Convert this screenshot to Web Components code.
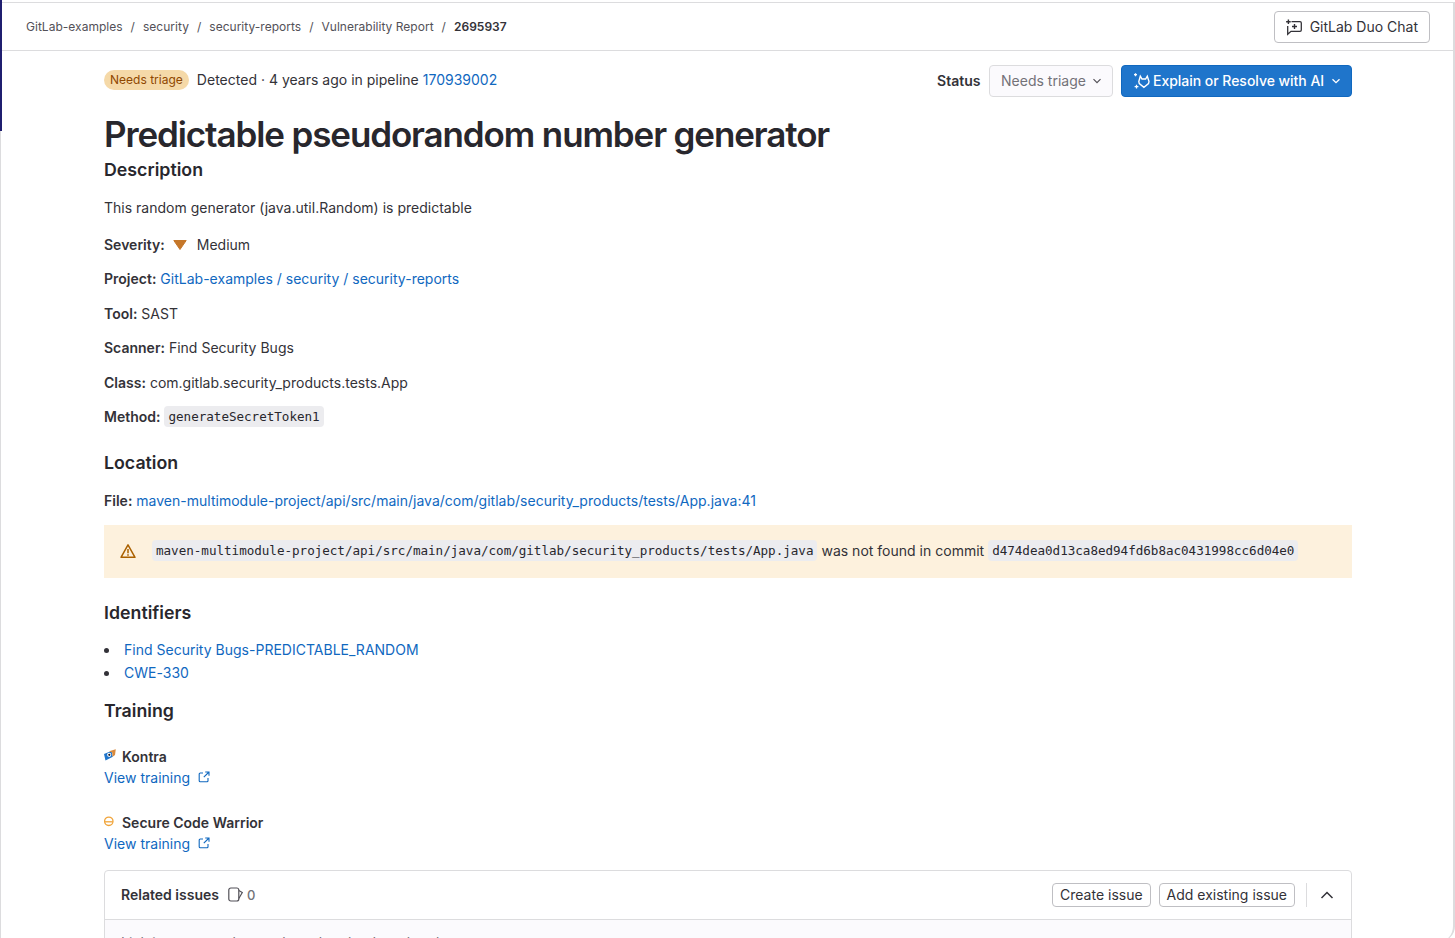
<!DOCTYPE html>
<html lang="en">
<head>
<meta charset="utf-8">
<title>Predictable pseudorandom number generator</title>
<style>
    html, body { margin: 0; height: 100%; background: #fff; overflow: hidden; }
    body { font-family: Inter, "Noto Sans", sans-serif; font-size: 14px; line-height: 20px; color: #333238; letter-spacing: .01px; }
</style>
</head>
<body>
<app-frame>
    <top-bar slot="top"></top-bar>
    <vuln-header></vuln-header>
    <h-title>Predictable pseudorandom number generator</h-title>
    <section-head style="margin-top:4px">Description</section-head>
    <detail-row gap="15.75">This random generator (java.util.Random) is predictable</detail-row>
    <severity-row></severity-row>
    <detail-row gap="14.5"><b>Project:</b> <gl-link>GitLab-examples / security / security-reports</gl-link></detail-row>
    <detail-row gap="14.5"><b>Tool:</b> SAST</detail-row>
    <detail-row gap="14.5"><b>Scanner:</b> Find Security Bugs</detail-row>
    <detail-row gap="14.5"><b>Class:</b> com.gitlab.security_products.tests.App</detail-row>
    <detail-row gap="13.5" style="height:20px"><b>Method:</b> <code-chip>generateSecretToken1</code-chip></detail-row>
    <section-head style="margin-top:24.25px">Location</section-head>
    <detail-row gap="16"><b>File:</b> <gl-link>maven-multimodule-project/api/src/main/java/com/gitlab/security_products/tests/App.java:41</gl-link></detail-row>
    <warn-alert><code-chip>maven-multimodule-project/api/src/main/java/com/gitlab/security_products/tests/App.java</code-chip> was not found in commit <code-chip>d474dea0d13ca8ed94fd6b8ac0431998cc6d04e0</code-chip></warn-alert>
    <section-head style="margin-top:23px">Identifiers</section-head>
    <id-list>
        <id-item><gl-link>Find Security Bugs-PREDICTABLE_RANDOM</gl-link></id-item>
        <id-item><gl-link>CWE-330</gl-link></id-item>
    </id-list>
    <section-head style="margin-top:14px">Training</section-head>
    <training-item name="Kontra" style="margin-top:23px" logo="kontra"></training-item>
    <training-item name="Secure Code Warrior" style="margin-top:24px" logo="scw"></training-item>
    <related-issues></related-issues>
</app-frame>

<script>
    class AppFrame extends HTMLElement {
        constructor() {
            super();
            this.attachShadow({mode: 'open'}).innerHTML = `
            <style>
                :host { display: block; height: 938px; box-sizing: border-box; position: relative; overflow: hidden; }
                .window {
                    height: 940px;
                    margin-top: 2px;
                    box-sizing: border-box;
                    border: 1px solid #dcdcde;
                    border-bottom: 0;
                    border-right-width: 2px;
                    border-radius: 0 0 16px 0;
                    overflow: hidden;
                }
                .content { padding: 0 101px 0 103px; }
                /* accent of the nav sidebar that shows at the window's edge */
                .edge { position: absolute; left: 0; top: 0; width: 2px; height: 131px; background: #1f1e6f; }
            </style>
            <div class="edge"></div>
            <div class="window">
                <slot name="top"></slot>
                <div class="content"><slot></slot></div>
            </div>`;
        }
    }

    class TopBar extends HTMLElement {
        constructor() {
            super();
            this.attachShadow({mode: 'open'}).innerHTML = `
            <style>
                :host { display: flex; align-items: center; justify-content: space-between; height: 47px; padding: 0 23px 0 25px; border-bottom: 1px solid #dcdcde; font-size: 12px; color: #535158; letter-spacing: .02px; }
                nav { display: flex; gap: 8px; align-items: center; }
                b { font-weight: 600; color: #333238; }
                button {
                    display: flex; align-items: center; gap: 7px; height: 32px; padding: 0 11px 0 10px; box-sizing: border-box;
                    background: #fff; border: 1px solid #bfbfc3; border-radius: 4px;
                    font: 400 14px Inter, sans-serif; color: #333238;
                }
                svg { width: 18px; height: 18px; }
            </style>
            <nav>
                <span>GitLab-examples</span><span>/</span>
                <span>security</span><span>/</span>
                <span>security-reports</span><span>/</span>
                <span>Vulnerability Report</span><span>/</span>
                <b>2695937</b>
            </nav>
            <button>
                <svg viewBox="0 0 18 18" fill="none" stroke="#333238" stroke-width="1.3">
                    <path d="M6.500 3.700H15a1.300 1.300 0 0 1 1.300 1.300v7a1.300 1.300 0 0 1-1.300 1.300H6L2.700 16.300V8"/>
                    <path d="M9.500 6v5M7 8.500h5" stroke-width="1.400"/>
                    <path d="M3.400 1.500v4.600M1.100 3.800h4.600" stroke-width="1.400"/>
                </svg>
                GitLab Duo Chat
            </button>`;
        }
    }

    class VulnHeader extends HTMLElement {
        constructor() {
            super();
            this.attachShadow({mode: 'open'}).innerHTML = `
            <style>
                :host { display: flex; align-items: center; justify-content: space-between; height: 32px; margin-top: 14px; }
                .left, .right { display: flex; align-items: center; }
                .left { margin-bottom: 2px; }
                .badge { background: #f5d9a8; color: #8f4700; font-size: 12px; line-height: 16px; padding: 2px 6px; border-radius: 10px; margin-right: 8px; }
                a { color: #1068bf; text-decoration: none; }
                .label { font-weight: 600; margin-right: 8.5px; }
                .status {
                    display: flex; align-items: center; justify-content: space-between; width: 124px; height: 32px; box-sizing: border-box; padding: 0 10px 0 11px;
                    background: #fbfafd; border: 1px solid #dcdcde; border-radius: 4px; color: #737278; margin-right: 8px;
                }
                .ai {
                    display: flex; align-items: center; gap: 2px; width: 231px; height: 32px; box-sizing: border-box; padding: 0 0 0 11px;
                    background: #1f75cb; border-radius: 4px; color: #fff; font-weight: 500; border: 1px solid #1068bf; letter-spacing: -.03px;
                }
                .ai svg.chev { margin-left: 5px; }
                svg.chev { width: 10px; height: 10px; }
                svg.tanuki { width: 18px; height: 18px; }
            </style>
            <div class="left">
                <span class="badge">Needs triage</span>
                <span>Detected · 4 years ago in pipeline <a>170939002</a></span>
            </div>
            <div class="right">
                <span class="label">Status</span>
                <div class="status">Needs triage
                    <svg class="chev" viewBox="0 0 10 10" fill="none" stroke="#535158" stroke-width="1.2"><path d="M1.500 3.200 5 6.700l3.500-3.500"/></svg>
                </div>
                <div class="ai">
                    <svg class="tanuki" viewBox="0 0 18 18" fill="none" stroke="#fff" stroke-width="1.4">
                        <path d="M7.300 4.200 9 7h3.600l1.700-2.800 1.700 5.400-.5 2-4.600 3.700L6.300 11.600l-.5-2z"/>
                        <path d="M2.500 1.200v3M1 2.700h3M3.500 12.800v3.800M1.600 14.700h3.800" stroke-width="1.300"/>
                    </svg>
                    Explain or Resolve with AI
                    <svg class="chev" viewBox="0 0 10 10" fill="none" stroke="#fff" stroke-width="1.3"><path d="M1.500 3.200 5 6.700l3.500-3.500"/></svg>
                </div>
            </div>`;
        }
    }

    class HTitle extends HTMLElement {
        constructor() {
            super();
            this.attachShadow({mode: 'open'}).innerHTML = `
            <style>
                :host { display: block; margin-top: 17px; font-size: 35px; line-height: 40px; font-weight: 600; color: #28272d; letter-spacing: -1.12px; }
            </style>
            <slot></slot>`;
        }
    }

    class SectionHead extends HTMLElement {
        constructor() {
            super();
            this.attachShadow({mode: 'open'}).innerHTML = `
            <style>
                :host { display: block; font-size: 17.75px; line-height: 24px; font-weight: 600; color: #28272d; }
            </style>
            <slot></slot>`;
        }
    }

    class DetailRow extends HTMLElement {
        constructor() {
            super();
            this.attachShadow({mode: 'open'}).innerHTML = `
            <style>
                :host { display: block; line-height: 20px; }
                ::slotted(b) { font-weight: 600; }
            </style>
            <slot></slot>`;
        }
        connectedCallback() {
            this.style.marginTop = this.getAttribute('gap') + 'px';
        }
    }

    class SeverityRow extends HTMLElement {
        constructor() {
            super();
            this.attachShadow({mode: 'open'}).innerHTML = `
            <style>
                :host { display: flex; align-items: center; margin-top: 17px; height: 20px; }
                b { font-weight: 600; }
                svg { width: 14px; height: 14px; margin: 0 10px 0 8px; }
            </style>
            <b>Severity:</b>
            <svg viewBox="0 0 14 14"><path d="M.8 2.500h12.400L7 11.500z" fill="#c5772a" stroke="#c5772a" stroke-linejoin="round"/></svg>
            <span>Medium</span>`;
        }
    }

    class GlLink extends HTMLElement {
        constructor() {
            super();
            this.attachShadow({mode: 'open'}).innerHTML = `
            <style>
                :host { display: inline; color: #1068bf; }
            </style>
            <slot></slot>`;
        }
    }

    class CodeChip extends HTMLElement {
        constructor() {
            super();
            this.attachShadow({mode: 'open'}).innerHTML = `
            <style>
                :host { display: inline-block; vertical-align: 1px; font-family: "DejaVu Sans Mono", "Liberation Mono", monospace; font-size: 12.6px; line-height: 17px; padding: 2px 4px; background: #ececef; border-radius: 4px; color: #28272d; letter-spacing: -.025px; }
            </style>
            <slot></slot>`;
        }
    }

    class WarnAlert extends HTMLElement {
        constructor() {
            super();
            this.attachShadow({mode: 'open'}).innerHTML = `
            <style>
                :host { display: flex; align-items: center; height: 53px; margin-top: 14px; padding-left: 16px; background: #fdf1dd; }
                svg { width: 16px; height: 16px; margin-right: 16px; flex: none; }
                .msg { white-space: nowrap; margin-bottom: 2px; }
            </style>
            <svg viewBox="0 0 16 16" fill="none" stroke="#ab6100" stroke-width="1.500">
                <path d="M8 1.800 15 14.300H1z" stroke-linejoin="round"/>
                <path d="M8 6v4.300M8 11.300v1.400"/>
            </svg>
            <div class="msg"><slot></slot></div>`;
        }
    }

    class IdList extends HTMLElement {
        constructor() {
            super();
            this.attachShadow({mode: 'open'}).innerHTML = `
            <style>
                :host { display: block; margin-top: 14px; }
            </style>
            <slot></slot>`;
        }
    }

    class IdItem extends HTMLElement {
        constructor() {
            super();
            this.attachShadow({mode: 'open'}).innerHTML = `
            <style>
                :host { display: flex; align-items: center; height: 23px; }
                .dot { width: 5px; height: 5px; border-radius: 50%; background: #333238; margin-right: 15px; }
            </style>
            <span class="dot"></span><slot></slot>`;
        }
    }

    class TrainingItem extends HTMLElement {
        constructor() {
            super();
            const logos = {
                kontra: `<svg class="logo" style="margin-top:-2px" viewBox="0 0 12 12">
                    <path d="M0 5 7.500 2 8.800 7.800 1.500 11.500z" fill="#1f75cb"/>
                    <path d="M5 2.200 11.800 .3 11 6 8.600 7.800 8.200 3.400z" fill="#d98a3d"/>
                    <circle cx="5.200" cy="5.800" r="2.100" fill="#fff"/><circle cx="5.300" cy="5.800" r="1.100" fill="#1b1b24"/>
                </svg>`,
                scw: `<svg class="logo" viewBox="0 0 12 12" fill="none" stroke="#f0a43a" stroke-width="1.300" style="margin-top:-1px">
                    <circle cx="4.800" cy="5.300" r="4.200"/><path d="M.8 5.800h8"/>
                </svg>`
            };
            this.attachShadow({mode: 'open'}).innerHTML = `
            <style>
                :host { display: block; line-height: 21px; }
                .name { display: flex; align-items: center; font-weight: 600; }
                .logo { width: 12px; height: 12px; margin-right: 6px; }
                a { display: inline-flex; align-items: center; color: #1068bf; }
                svg.ext { width: 12px; height: 12px; margin-left: 8px; }
            </style>
            <div class="name">${logos[this.getAttribute('logo')]}${this.getAttribute('name')}</div>
            <a>View training
                <svg class="ext" viewBox="0 0 12 12" fill="none" stroke="#1068bf" stroke-width="1.100">
                    <path d="M5 2H2.200a1 1 0 0 0-1 1v6.800a1 1 0 0 0 1 1H9a1 1 0 0 0 1-1V7"/>
                    <path d="M7.200 1H11v3.800M11 1 5.800 6.200"/>
                </svg>
            </a>`;
        }
    }

    class RelatedIssues extends HTMLElement {
        constructor() {
            super();
            this.attachShadow({mode: 'open'}).innerHTML = `
            <style>
                :host { display: block; margin-top: 16px; border: 1px solid #dcdcde; border-radius: 4px 4px 0 0; }
                header { display: flex; align-items: center; height: 48px; padding: 0 16px; border-bottom: 1px solid #dcdcde; }
                .title { font-weight: 600; margin-right: 9px; }
                .count { color: #737278; font-size: 13px; font-weight: 500; margin-left: 4px; }
                svg.doc { width: 15px; height: 15px; }
                .actions { margin-left: auto; display: flex; align-items: center; }
                button { height: 24px; padding: 0 7px; box-sizing: border-box; background: #fff; border: 1px solid #bfbfc3; border-radius: 4px; font: 400 14px Inter, sans-serif; color: #333238; margin-left: 8px; }
                .sep { width: 1px; height: 24px; background: #dcdcde; margin: 0 12px 0 11px; }
                svg.up { width: 16px; height: 16px; }
                .body { background: #fbfafd; padding: 13px 16px; height: 60px; color: #737278; }
            </style>
            <header>
                <span class="title">Related issues</span>
                <svg class="doc" viewBox="0 0 15 15" fill="none" stroke="#535158" stroke-width="1.200">
                    <path d="M10.800 3A2 2 0 0 0 8.800 1H2.800A2 2 0 0 0 .8 3v9a2 2 0 0 0 2 2h6a2 2 0 0 0 2-2z"/>
                    <path d="M10.800 3.500 14.300 5.500l-3.500 6"/>
                </svg>
                <span class="count">0</span>
                <div class="actions">
                    <button>Create issue</button>
                    <button>Add existing issue</button>
                    <span class="sep"></span>
                    <svg class="up" viewBox="0 0 16 16" fill="none" stroke="#333238" stroke-width="1.500"><path d="M2.500 11 8 5.500 13.500 11"/></svg>
                </div>
            </header>
            <div class="body">Link issues together to show that they're related.</div>`;
        }
    }

    customElements.define('app-frame', AppFrame);
    customElements.define('top-bar', TopBar);
    customElements.define('vuln-header', VulnHeader);
    customElements.define('h-title', HTitle);
    customElements.define('section-head', SectionHead);
    customElements.define('detail-row', DetailRow);
    customElements.define('severity-row', SeverityRow);
    customElements.define('gl-link', GlLink);
    customElements.define('code-chip', CodeChip);
    customElements.define('warn-alert', WarnAlert);
    customElements.define('id-list', IdList);
    customElements.define('id-item', IdItem);
    customElements.define('training-item', TrainingItem);
    customElements.define('related-issues', RelatedIssues);
</script>
</body>
</html>
